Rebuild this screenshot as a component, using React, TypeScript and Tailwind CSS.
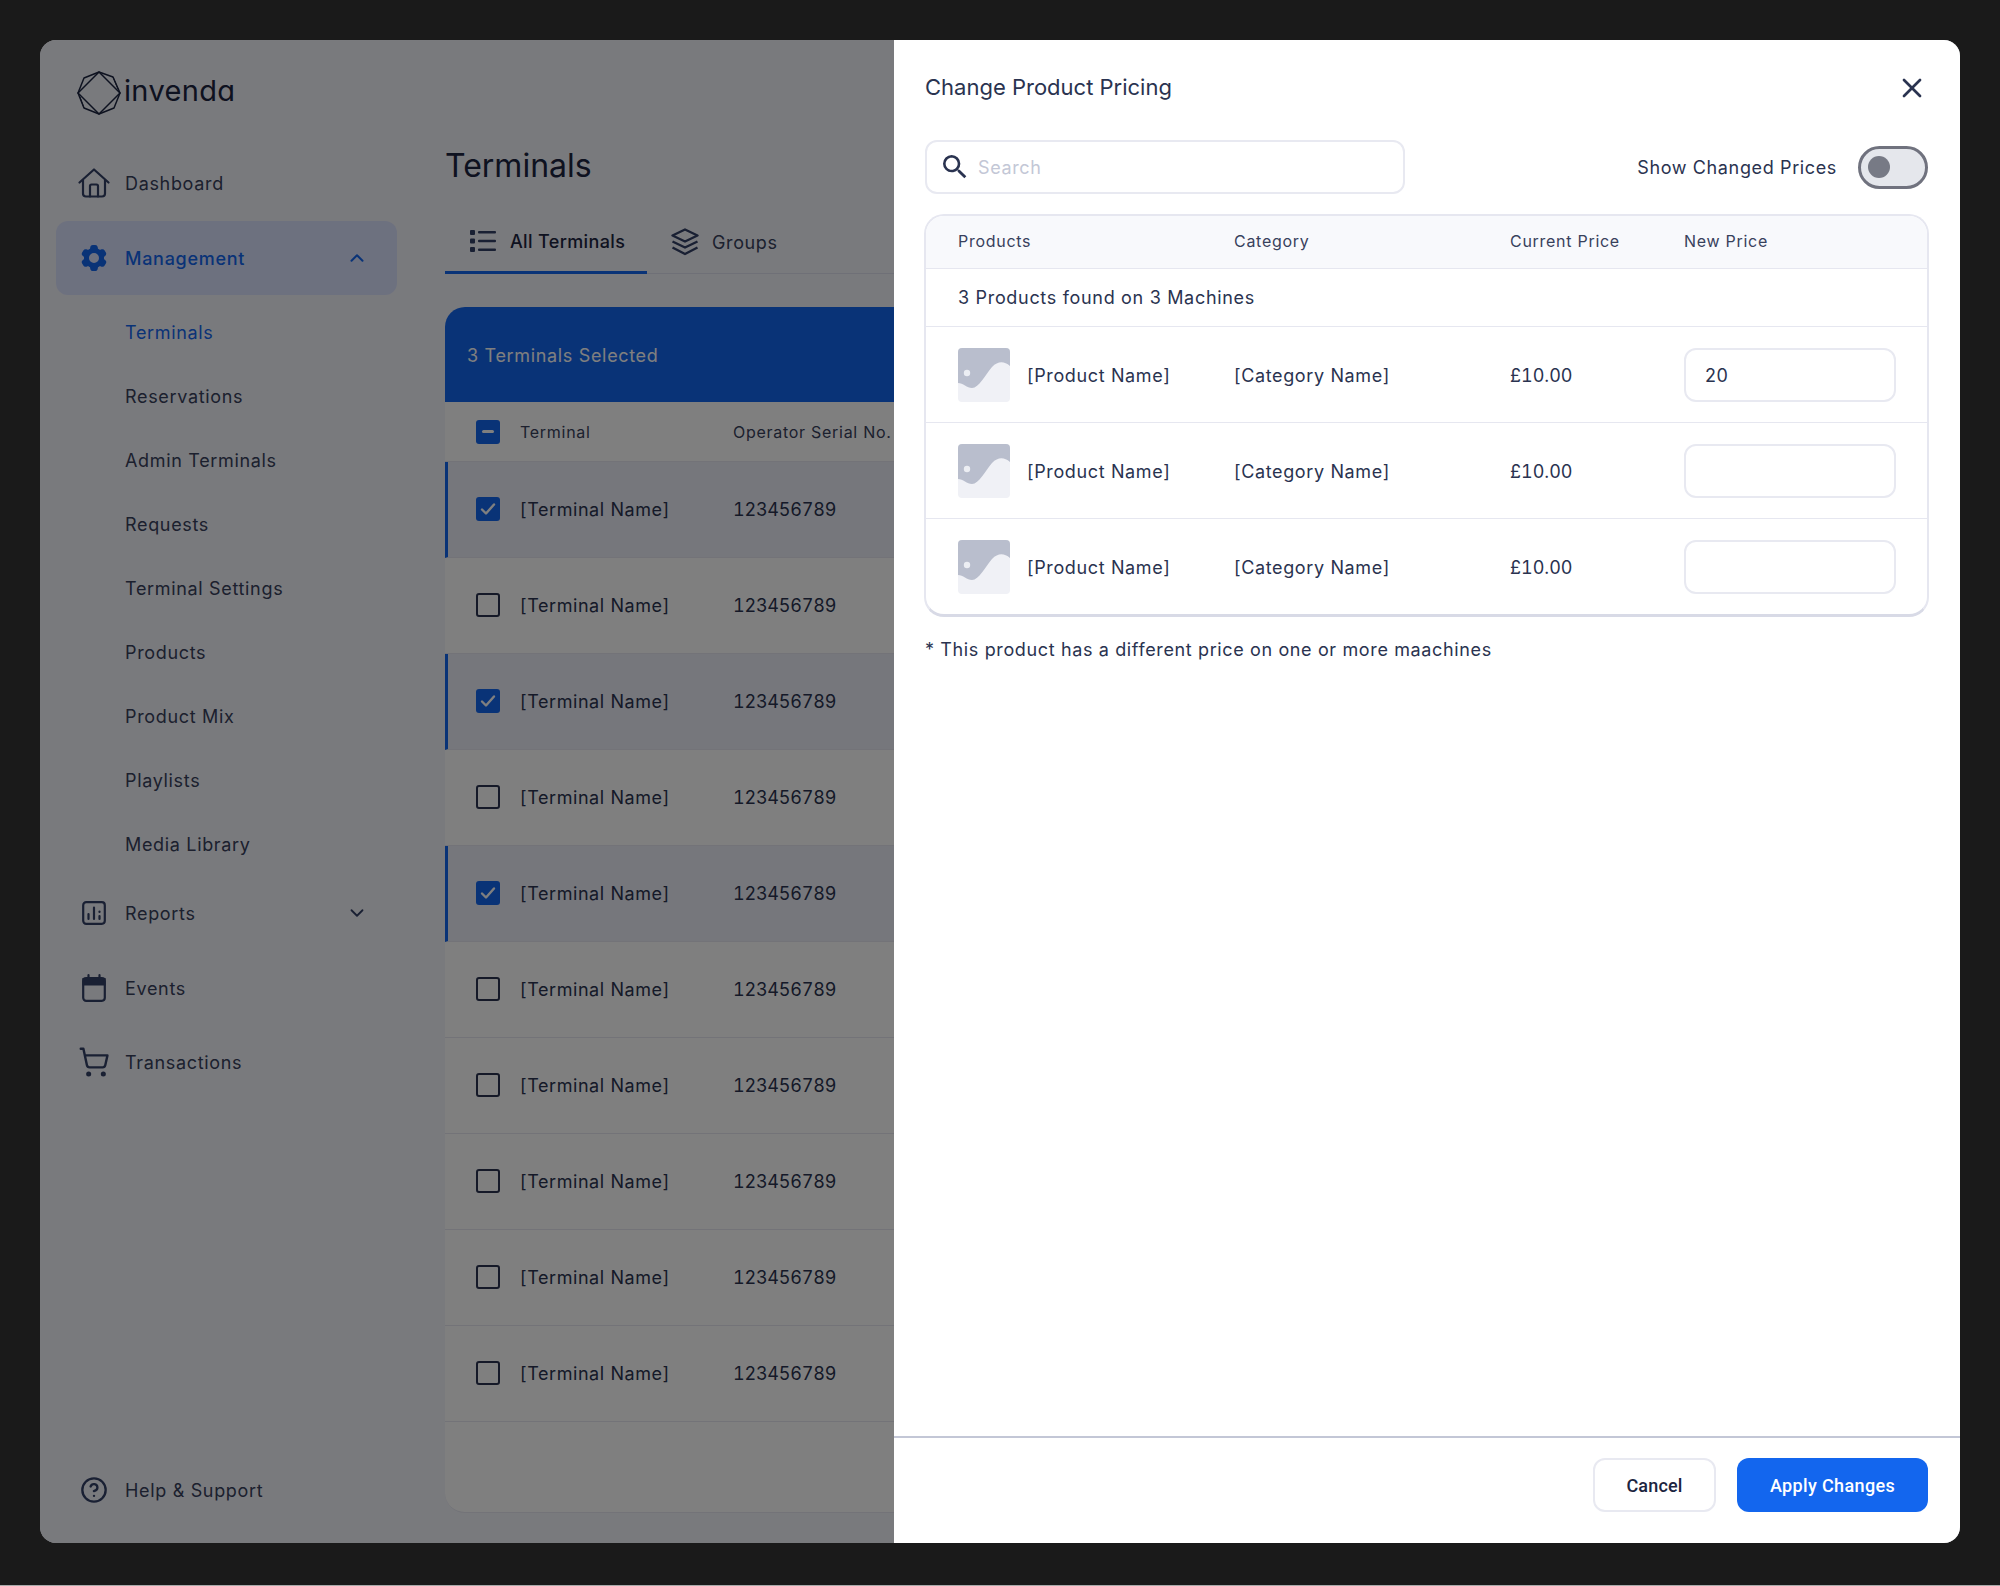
import { ChevronDown, ChevronUp, CircleHelp, ShoppingCart, X } from "lucide-react";
import { HiCog6Tooth } from "react-icons/hi2";
import { MdSearch } from "react-icons/md";

const SUB_ITEMS = ["Terminals", "Reservations", "Admin Terminals", "Requests", "Terminal Settings", "Products", "Product Mix", "Playlists", "Media Library"];
const SELECTED_ROWS = [0, 2, 4];

function Logo() {
  return (
    <svg width="44" height="44" viewBox="0 0 44 44" fill="none" stroke="#1c2540" strokeWidth="1.5" strokeLinejoin="round">
      <path d="M22 1 L43 22 L22 43 L1 22 Z" />
      <path d="M22 1 L36 6 L43 22 L37 37 L22 43 L7 37 L1 22 L7 7 Z" />
      <path d="M36 6 L41 18 M7 37 L3 26" strokeWidth="1" />
    </svg>
  );
}

function HomeIcon() {
  return (
    <svg width="32" height="30" viewBox="0 0 32 30" fill="none" stroke="#334066" strokeWidth="2.2" strokeLinecap="round" strokeLinejoin="round">
      <path d="M1.5 14.5 L16 1.5 L30.5 14.5" />
      <path d="M5 12 V25.5 a3 3 0 0 0 3 3 H24 a3 3 0 0 0 3 -3 V12" />
      <path d="M12 28.5 V18 a1.5 1.5 0 0 1 1.5 -1.5 H18.5 a1.5 1.5 0 0 1 1.5 1.5 V28.5" />
    </svg>
  );
}

function ReportsIcon() {
  return (
    <svg width="24" height="24" viewBox="0 0 24 24" fill="none" stroke="#334066" strokeWidth="2.2" strokeLinecap="round">
      <rect x="1.2" y="1.2" width="21.6" height="21.6" rx="3" />
      <path d="M6.5 18 V13 M12 18 V6.5 M17.5 18 V15 M17.5 11 V10.5" />
    </svg>
  );
}

function CalendarIcon() {
  return (
    <svg width="24" height="28" viewBox="0 0 24 28" fill="none" stroke="#334066" strokeWidth="2.2" strokeLinecap="round">
      <rect x="1.2" y="4.2" width="21.6" height="22.6" rx="3" />
      <path d="M1.5 5 H22.5 V10.5 H1.5 Z" fill="#334066" />
      <path d="M6.5 1.2 V5 M17.5 1.2 V5" />
    </svg>
  );
}

function ListIcon() {
  return (
    <svg width="26" height="22" viewBox="0 0 26 22" fill="#334066">
      <rect x="0" y="0" width="5" height="5" rx="1" />
      <rect x="0" y="8.5" width="5" height="5" rx="1" />
      <rect x="0" y="17" width="5" height="5" rx="1" />
      <rect x="8" y="1" width="18" height="2.4" rx="1" />
      <rect x="8" y="9.8" width="18" height="2.4" rx="1" />
      <rect x="8" y="18.6" width="18" height="2.4" rx="1" />
    </svg>
  );
}

function StackIcon() {
  return (
    <svg width="28" height="28" viewBox="0 0 28 28" fill="none" stroke="#334066" strokeWidth="2.4" strokeLinejoin="round">
      <path d="M14 1.5 L26.5 7.5 L14 13.5 L1.5 7.5 Z" />
      <path d="M1.5 13.5 L14 19.5 L26.5 13.5" />
      <path d="M1.5 19.5 L14 26 L26.5 19.5" />
    </svg>
  );
}

function Thumb() {
  return (
    <svg width="52" height="54" viewBox="0 0 52 54" className="shrink-0 rounded-[4px]">
      <rect width="52" height="54" fill="#f0f1f6" />
      <path d="M0 0 H52 V18 C46 13 40 13 34 19 C27 27 21 40 14 40 C9 40 5 35 0 35 Z" fill="#b9becd" />
      <circle cx="9" cy="25" r="3.2" fill="#eceef3" />
    </svg>
  );
}

function Checkbox({ checked }: { checked: boolean }) {
  if (!checked) return <span className="h-6 w-6 shrink-0 rounded-[3px] border-[2.5px] border-[#2a3350]" />;
  return (
    <span className="flex h-6 w-6 shrink-0 items-center justify-center rounded-[3px] bg-[#1366ee]">
      <svg width="16" height="14" viewBox="0 0 16 14" fill="none" stroke="#ffffff" strokeWidth="2.4" strokeLinecap="round" strokeLinejoin="round">
        <path d="M2 7.5 L6 11.5 L14 2.5" />
      </svg>
    </span>
  );
}

function NavRow({ icon, label, chevron }: { icon: React.ReactNode; label: string; chevron?: boolean }) {
  return (
    <div className="mr-12 ml-4 flex h-[74px] items-center rounded-xl pr-[29px] text-[18px] tracking-[0.037em] text-[#38415c]">
      <span className="flex w-[69px] justify-center pl-[7px]">{icon}</span>
      <span>{label}</span>
      {chevron && <ChevronDown className="ml-auto h-[22px] w-[22px] text-[#334066]" strokeWidth={2} />}
    </div>
  );
}

function ProductRow({ value }: { value: string }) {
  return (
    <div className="grid h-24 grid-cols-[276px_276px_174px_212px] items-center border-t border-[#e6e7f0] pr-[31px] pl-[32px] text-[18px] tracking-[0.035em] text-[#2a3350]">
      <div className="flex items-center gap-[17px]">
        <Thumb />
        <span className="pt-[2px]">[Product Name]</span>
      </div>
      <span className="pt-[2px]">[Category Name]</span>
      <span className="pt-[2px] tracking-normal tabular-nums">£10.00</span>
      <div className="flex h-[54px] items-center rounded-xl border-2 border-[#e8e9f1] pt-[2px] pl-[19px]">{value}</div>
    </div>
  );
}

export default function App() {
  return (
    <div className="h-[1586px] border-b border-[#aaaaaa] bg-[#1a1a1a] pt-10 font-['Inter',sans-serif]">
      <div className="relative mx-10 flex h-[1503px] overflow-hidden rounded-2xl bg-[#f3f4fb]">
        {/* Sidebar */}
        <aside className="flex w-[405px] shrink-0 flex-col">
          <div className="mt-[31px] mb-[31px] flex h-[44px] items-center gap-[3px] pl-[37px]">
            <Logo />
            <span className="-mt-[5px] text-[29px] leading-none tracking-[0.012em] text-[#1c2540] [font-feature-settings:'cv11']">invenda</span>
          </div>
          <NavRow icon={<HomeIcon />} label="Dashboard" />
          <div className="mt-[1px] mr-12 ml-4 flex h-[74px] items-center rounded-xl bg-[#dbe2ff] pr-[29px] text-[18px] font-medium tracking-[0.04em] text-[#1366ee]">
            <span className="flex w-[69px] justify-center pl-[7px]">
              <HiCog6Tooth className="h-8 w-8" />
            </span>
            <span>Management</span>
            <ChevronUp className="ml-auto h-[22px] w-[22px]" strokeWidth={2.2} />
          </div>
          <div className="mt-[5px]">
            {SUB_ITEMS.map((item, i) => (
              <div key={item} className={`flex h-16 items-center pl-[85px] text-[18px] tracking-[0.037em] ${i === 0 ? "text-[#1366ee]" : "text-[#38415c]"}`}>
                {item}
              </div>
            ))}
          </div>
          <NavRow icon={<ReportsIcon />} label="Reports" chevron />
          <div className="pt-[1px]">
            <NavRow icon={<CalendarIcon />} label="Events" />
          </div>
          <NavRow icon={<ShoppingCart className="h-8 w-8 text-[#334066]" strokeWidth={1.8} />} label="Transactions" />
          <div className="mt-auto mb-4">
            <NavRow icon={<CircleHelp className="h-[28px] w-[28px] text-[#334066]" strokeWidth={2} />} label="Help & Support" />
          </div>
        </aside>

        {/* Main */}
        <main className="flex min-w-0 flex-1 flex-col pt-[106px] pb-[30px]">
          <h1 className="text-[32px] leading-10 text-[#1c2540]">Terminals</h1>
          <div className="mt-[24px] flex h-16 items-center border-b border-[#dfe1ee] text-[18px] tracking-[0.035em]">
            <div className="-mb-[1px] flex h-16 w-[202px] items-center gap-[14px] border-b-[3px] border-[#1366ee] pt-[1px] pl-[25px] font-medium tracking-[0.02em] text-[#1c2540]">
              <ListIcon />
              <span>All Terminals</span>
            </div>
            <div className="ml-6 flex items-center gap-[13px] pt-[1px] text-[#38415c]">
              <StackIcon />
              <span>Groups</span>
            </div>
          </div>
          <div className="mt-[33px] flex flex-1 flex-col overflow-hidden rounded-tl-[20px] rounded-bl-[20px] border-b border-[#e6e7f0] bg-white">
            <div className="flex h-[95px] shrink-0 items-center bg-[#1366ee] pt-[2px] pl-[22px] text-[18px] tracking-[0.037em] text-white">3 Terminals Selected</div>
            <div className="flex h-[59.6px] shrink-0 items-center border-b border-[#e6e7f0] bg-white pt-[1px] pl-[31px] text-[16px] tracking-[0.045em] text-[#38415c]">
              <span className="flex h-6 w-6 shrink-0 items-center justify-center rounded-[3px] bg-[#1366ee]">
                <span className="h-[3px] w-3 rounded-sm bg-white" />
              </span>
              <span className="ml-5 w-[213px]">Terminal</span>
              <span className="whitespace-nowrap">Operator Serial No.</span>
            </div>
            {Array.from({ length: 10 }, (_, i) => {
              const selected = SELECTED_ROWS.includes(i);
              return (
                <div key={i} className={`flex h-24 shrink-0 items-center border-b border-[#e6e7f0] text-[18px] tracking-[0.032em] text-[#2a3350] ${selected ? "border-l-[3px] border-l-[#1366ee] bg-[#eceef8] pl-[28px]" : "pl-[31px]"}`}>
                  <Checkbox checked={selected} />
                  <span className="ml-5 w-[213px]">[Terminal Name]</span>
                  <span className="tracking-[-0.012em] tabular-nums">123456789</span>
                </div>
              );
            })}
          </div>
        </main>

        {/* Dim layer over the page */}
        <div className="absolute inset-0 bg-black/50" />

        {/* Drawer */}
        <div className="absolute top-0 right-0 bottom-0 flex w-[1066px] flex-col bg-white">
          <div className="flex h-[100px] items-center justify-between pr-[32px] pb-[5px] pl-[31px]">
            <h2 className="text-[22px] text-[#2a3350]">Change Product Pricing</h2>
            <X className="h-8 w-8 text-[#2a3350]" strokeWidth={2} />
          </div>
          <div className="flex items-center justify-between pr-[32px] pl-[31px]">
            <div className="flex h-[54px] w-[480px] items-center gap-[7px] rounded-xl border-2 border-[#e8e9f1] pl-[12px] text-[18px] tracking-[0.035em] text-[#c3c7d6]">
              <MdSearch className="h-8 w-8 text-[#2a3350]" />
              <span>Search</span>
            </div>
            <div className="flex items-center gap-[21px] text-[18px] tracking-[0.035em] text-[#2a3350]">
              <span>Show Changed Prices</span>
              <span className="flex h-[43px] w-[70px] items-center rounded-full border-[3px] border-[#70727e] bg-[#e5e7ec] pl-[7px]">
                <span className="h-[22px] w-[22px] rounded-full bg-[#777a85]" />
              </span>
            </div>
          </div>
          <div className="mt-5 mr-[31px] ml-[30px] overflow-hidden rounded-[20px] border-x-2 border-t-2 border-b-[3px] border-[#e6e7f0] border-b-[#d8dae6]">
            <div className="grid h-[52px] grid-cols-[276px_276px_174px_212px] items-center bg-[#f8f9fc] pr-[31px] pb-[2px] pl-[32px] text-[16px] tracking-[0.045em] text-[#38415c]">
              <span>Products</span>
              <span>Category</span>
              <span>Current Price</span>
              <span>New Price</span>
            </div>
            <div className="flex h-[58px] items-center border-t border-[#e6e7f0] pl-[32px] text-[18px] tracking-[0.038em] text-[#2a3350]">3 Products found on 3 Machines</div>
            <ProductRow value="20" />
            <ProductRow value="" />
            <ProductRow value="" />
          </div>
          <p className="mt-[19px] pl-[31px] text-[18px] tracking-[0.035em] text-[#2a3350]">* This product has a different price on one or more maachines</p>
          <div className="mt-auto flex h-[107px] items-start justify-end gap-[21px] border-t-2 border-[#c3c7d6] pt-5 pr-[32px]">
            <button className="h-[54px] w-[123px] rounded-xl border-2 border-[#e8e9f1] font-['Roboto',sans-serif] text-[18px] font-medium tracking-[0.01em] text-[#1c2540]">Cancel</button>
            <button className="h-[54px] w-[191px] rounded-xl bg-[#1366ee] font-['Roboto',sans-serif] text-[18px] font-medium tracking-[0.02em] text-white">Apply Changes</button>
          </div>
        </div>
      </div>
    </div>
  );
}
